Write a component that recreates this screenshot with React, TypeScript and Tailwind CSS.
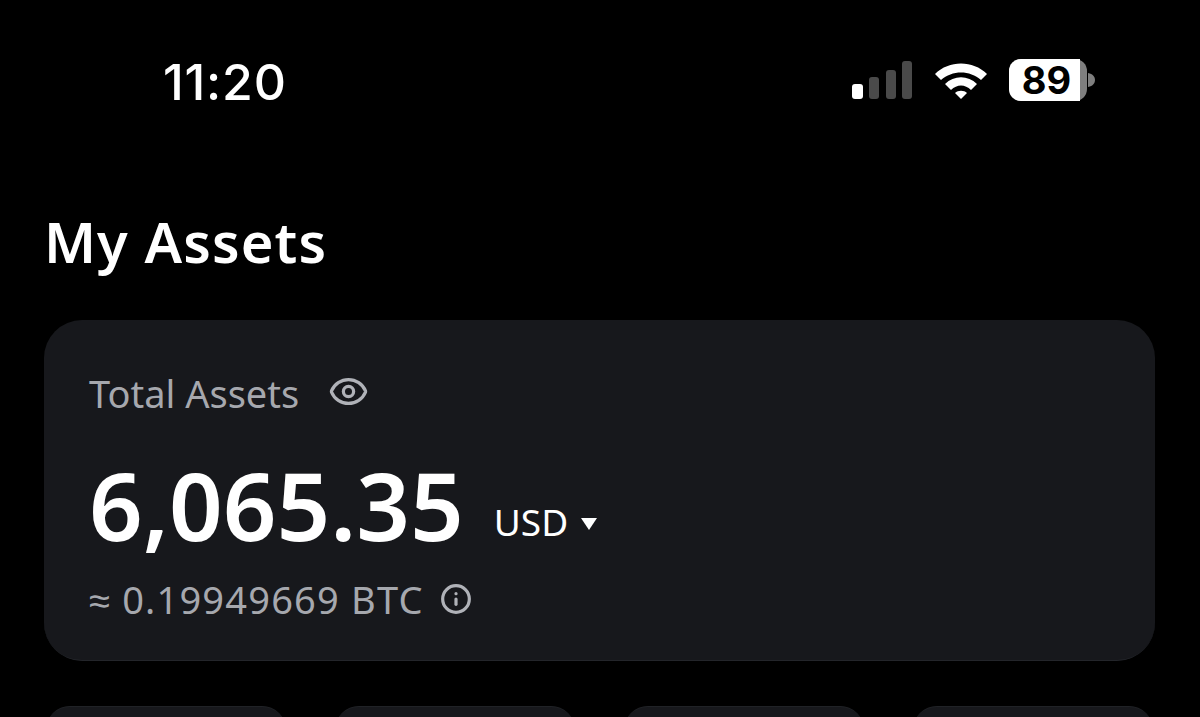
import { Eye, Info } from "lucide-react";

const sans = "font-['Noto_Sans','Liberation_Sans',sans-serif]";
const systemUi = "font-['Inter','Liberation_Sans',sans-serif]";

function StatusIcons() {
  return (
    <div className="flex items-center">
      <svg width="62" height="42" viewBox="0 0 62 42" className="block">
        <rect x="1" y="25" width="11" height="15" rx="3" fill="#ffffff" />
        <rect x="18" y="18" width="10" height="22" rx="3" fill="#4a4a4a" />
        <rect x="35" y="11" width="10" height="29" rx="3" fill="#4a4a4a" />
        <rect x="51" y="2" width="10" height="38" rx="3" fill="#4a4a4a" />
      </svg>
      <svg width="54" height="40" viewBox="0 0 54 40" className="ml-[21px] block">
        <path d="M1 14C15 0 39 0 53 14L47 20C36 10 18 10 7 20Z" fill="#ffffff" />
        <path d="M11 24C20 15 34 15 43 24L37 30C31 24 23 24 17 30Z" fill="#ffffff" />
        <path d="M21 33C24 30 30 30 33 33L27 39Z" fill="#ffffff" />
      </svg>
      <div className="relative ml-[21px] flex h-[42px] w-[78px] items-center justify-center rounded-[12px] bg-[#7f7f7f]">
        <div className="absolute inset-y-0 left-0 w-[71px] rounded-l-[12px] bg-white" />
        <span className={`relative -ml-[3px] text-[38px] font-bold leading-[42px] text-black ${systemUi}`}>89</span>
      </div>
      <svg width="8" height="14" viewBox="0 0 8 14" className="ml-[1px] block">
        <path d="M0 0C5 1 7 4 7 7C7 10 5 13 0 14Z" fill="#7f7f7f" />
      </svg>
    </div>
  );
}

function Tile() {
  return <div className="h-[120px] rounded-[24px] border-t border-[#202226] bg-[#17181c]" />;
}

export default function App() {
  return (
    <div className={`h-[717px] w-[1200px] overflow-hidden bg-black text-white ${sans}`}>
      <div className="flex h-[211px] items-start justify-between pl-[163px] pr-[104px] pt-[59px]">
        <span className={`text-[50px] font-medium leading-[46px] tracking-[0.8px] text-white ${systemUi}`}>11:20</span>
        <StatusIcons />
      </div>

      <h1 className="ml-[44px] text-[56px] font-semibold leading-[60px] tracking-[1.1px]">My Assets</h1>

      <div className="ml-[44px] mr-[45px] mt-[49px] h-[341px] rounded-[38px] border-b border-[#23252a] bg-[#17181c] pl-[45px] pt-[50px]">
        <div className="flex h-[46px] items-center text-[#a6a8ae]">
          <span className="text-[38px] font-normal leading-[46px]">Total Assets</span>
          <Eye size={41} strokeWidth={1.9} className="ml-[29px] -mt-[3px] text-[#b0b2b8]" />
        </div>
        <div className="mt-[47px] flex h-[84px] items-end">
          <span className="text-[94px] font-semibold leading-[84px] text-white">6,065.35</span>
          <span className="mb-[2px] ml-[30px] text-[37px] font-normal leading-[46px] text-white">USD</span>
          <svg width="16" height="12" viewBox="0 0 16 12" className="mb-[17px] ml-[13px] block">
            <path d="M0 0H16L8 12Z" fill="#ffffff" />
          </svg>
        </div>
        <div className="mt-[29px] flex h-[46px] items-center text-[#a6a8ae]">
          <span className="text-[38px] font-normal leading-[46px] tracking-[1.2px]">≈ 0.19949669 BTC</span>
          <Info size={32} strokeWidth={2.4} className="ml-[16px] text-[#b0b2b8]" />
        </div>
      </div>

      <div className="ml-[46px] mr-[47px] mt-[45px] grid grid-cols-4 gap-x-[49px]">
        <Tile />
        <Tile />
        <Tile />
        <Tile />
      </div>
    </div>
  );
}
